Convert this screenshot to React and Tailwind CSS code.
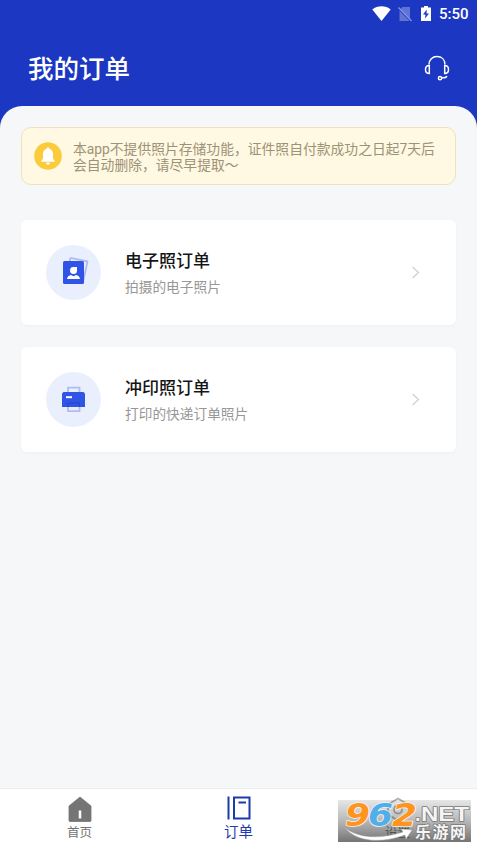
import React from 'react';
import clsx from 'clsx';

const StatusBar = () => (
  <div className="h-[27px] pr-[9px] flex items-center justify-end text-white">
    <svg className="w-[19px] h-[15px]" viewBox="0 0 19 15" fill="currentColor">
      <path d="M0.3 3.5C5.5-.9 13.5-.9 18.7 3.5L9.5 15Z" />
    </svg>
    <svg className="w-[14px] h-4 ml-[7px]" viewBox="0 0 14 16" fill="none">
      <path d="M4.5 1H12V15H1.500V4Z" fill="#fff" opacity="0.3" />
      <path d="M1 3L13.500 16" stroke="#1c38c3" strokeWidth="1.500" />
      <path d="M.5 1.500L13.500 15" stroke="#8494de" strokeWidth="1.300" />
    </svg>
    <svg className="w-[10px] h-[15px] ml-[9px]" viewBox="0 0 10 15">
      <path d="M3 0H7V1.500H10V15H0V1.500H3Z" fill="#fff" />
      <path d="M5.800 3.500L2 8.500H4.500L4 12.500L8 7.500H5.500Z" fill="#1c38c3" />
    </svg>
    <span className="ml-2 pt-0.5 w-[29px] text-[15px] leading-none font-medium whitespace-nowrap">5:50</span>
  </div>
);

const HeadsetIcon = () => (
  <svg className="w-[26px] h-[26px] mt-0.5" viewBox="0 0 26 26" fill="none" stroke="#fff" strokeWidth="1.5">
    <path d="M5 9.500C5 4.500 8.500 1.600 13 1.600S21 4.500 21 9.500" />
    <path d="M5.300 10.500V18.500C2.800 18.500 1.500 17 1.500 14.500S2.800 10.500 5.300 10.500Z" />
    <path d="M20.700 10.500V18.500C23.200 18.500 24.500 17 24.500 14.500S23.200 10.500 20.700 10.500Z" />
    <circle cx="16" cy="23.200" r="1.600" />
    <path d="M17.700 22.800C20 23 22.500 22.500 22.800 21" />
  </svg>
);

const BellIcon = () => (
  <svg className="w-7 h-7 shrink-0" viewBox="0 0 28 28">
    <circle cx="14" cy="14" r="13.800" fill="#fbcb3c" />
    <path d="M14 5.500C14.800 5.500 15.300 6 15.300 6.700C17.800 7.300 19 9.200 19 11.500V16.500L20.800 19V19.800H7.200V19L9 16.500V11.500C9 9.200 10.200 7.300 12.700 6.700C12.700 6 13.200 5.500 14 5.500Z" fill="#fff" />
    <path d="M12 20.500H16C15.700 22.200 15 22.700 14 22.700S12.300 22.200 12 20.500Z" fill="#fff" />
  </svg>
);

const PhotoIcon = () => (
  <svg className="w-[55px] h-[55px]" viewBox="0 0 55 55">
    <path d="M24.500 12.800L41.500 16.500L37.500 35" fill="none" stroke="#afbcf0" strokeWidth="1.800" strokeLinejoin="round" />
    <path d="M24.500 12.800L23.500 17" stroke="#afbcf0" strokeWidth="1.800" />
    <rect x="17" y="16" width="21" height="23" rx="1.500" fill="#2f54e6" />
    <path d="M27.800 22H31V25.400A3.500 3.500 0 1 1 27.800 22Z" fill="#fff" />
    <path d="M21 34C21.200 31.500 23 30.500 25 30L27.500 31.300L30 30C32.200 30.500 33.800 31.500 34 34Z" fill="#fff" />
  </svg>
);

const PrinterIcon = () => (
  <svg className="w-[55px] h-[55px]" viewBox="0 0 55 55">
    <path d="M22 21V15.700H33.500V21" fill="none" stroke="#afbcf0" strokeWidth="1.800" />
    <path d="M17.500 20H37.500L39 21.500V35H16V21.500Z" fill="#2f54e6" />
    <path d="M20 25.200H26" stroke="#fff" strokeWidth="2" />
    <path d="M22 35V31H33.500V35" fill="none" stroke="#2547c9" strokeWidth="1" />
    <path d="M22 35V39.200H33.500V35" fill="none" stroke="#afbcf0" strokeWidth="1.800" />
  </svg>
);

const HomeIcon = () => (
  <svg className="w-6 h-[26px]" viewBox="0 0 24 26">
    <path d="M12 1L23 10V24.500Q23 25.500 22 25.500H2Q1 25.500 1 24.500V10Z" fill="#757575" stroke="#757575" strokeWidth="0.800" strokeLinejoin="round" />
    <path d="M12 14.500V22.500" stroke="#fff" strokeWidth="2.500" />
  </svg>
);

const OrderIcon = () => (
  <svg className="w-6 h-6" viewBox="0 0 24 24" fill="none" stroke="#1f3bab" strokeWidth="2">
    <path d="M1.500 0.500V23.500M7 1.500H22.500V22.500H7ZM11.500 6.500H19" />
  </svg>
);

const SettingsIcon = () => (
  <svg className="w-6 h-[26px]" viewBox="0 0 24 26" fill="none" stroke="#b0b0b0" strokeWidth="1.800">
    <path d="M12 2.500L22 8.500V18.500L12 24.500L2 18.500V8.500Z" />
    <circle cx="12" cy="13.500" r="4" />
  </svg>
);

const orders = [
  { id: 'digital', title: '电子照订单', description: '拍摄的电子照片', icon: PhotoIcon },
  { id: 'print', title: '冲印照订单', description: '打印的快递订单照片', icon: PrinterIcon }
];

const tabs = [
  { id: 'home', label: '首页', icon: HomeIcon },
  { id: 'orders', label: '订单', icon: OrderIcon },
  { id: 'settings', label: '设置', icon: SettingsIcon }
];

const OrderCard = ({ title, description, icon: Icon }) => (
  <button className="w-full h-[105px] pl-[25px] pr-9 flex items-center text-left bg-white rounded-md shadow-[0_1px_3px_rgba(0,0,0,0.03)]">
    <div className="w-[55px] h-[55px] rounded-full bg-[#eaeffe]">
      <Icon />
    </div>
    <div className="ml-6 flex-1">
      <div className="pt-px text-[17px] leading-[25px] font-medium text-[#151515]">{title}</div>
      <div className="mt-0.5 text-[13.700px] leading-[22px] text-[#979797]">{description}</div>
    </div>
    <svg className="w-[9px] h-[13px]" viewBox="0 0 9 13" fill="none" stroke="#d0d0d0" strokeWidth="1.300">
      <path d="M1.500 1L7.500 6.500L1.500 12" />
    </svg>
  </button>
);

const Watermark = () => (
  <svg className="absolute left-[338px] top-[800px] w-[133px] h-[42px] overflow-visible" viewBox="0 0 133 42">
    <defs>
      <linearGradient id="plate" x1="0" y1="0" x2="0" y2="1">
        <stop offset="0" stopColor="#333" stopOpacity="0.120" />
        <stop offset="0.500" stopColor="#333" stopOpacity="0.350" />
        <stop offset="1" stopColor="#333" stopOpacity="0.680" />
      </linearGradient>
    </defs>
    <rect width="133" height="42" fill="url(#plate)" />
    <path d="M7 28C23 40 46 38 65 32L63 29L74 30L68 39L67 35C45 43 20 43 7 28Z" fill="#fff" stroke="#aaa" strokeWidth="0.500" />
    <g fontWeight="700" paintOrder="stroke" strokeLinejoin="round">
      <g fontFamily="DejaVu Sans, sans-serif" fontSize="32" fontStyle="italic" stroke="#f4f4f4" strokeWidth="1.500">
        <text x="7" y="25.500" textLength="25" lengthAdjust="spacingAndGlyphs" fill="#ff941f">9</text>
        <text x="30" y="25.500" textLength="25" lengthAdjust="spacingAndGlyphs" fill="#51aee8">6</text>
        <text x="54" y="25.500" textLength="25" lengthAdjust="spacingAndGlyphs" fill="#ff941f">2</text>
      </g>
      <g fontFamily="Liberation Sans, Noto Sans CJK SC, sans-serif" fill="#f5f5f5" stroke="#777" strokeWidth="1.500">
        <text x="77" y="20.500" fontSize="20" textLength="5">.</text>
        <text x="83" y="20.500" fontSize="20" textLength="48" lengthAdjust="spacingAndGlyphs">NET</text>
        <text x="77" y="38" fontSize="16" textLength="51">乐游网</text>
      </g>
    </g>
  </svg>
);

const App = () => {
  const activeTab = 'orders';

  return (
    <div className="relative h-[848px] flex flex-col overflow-hidden bg-[#1c38c3] font-[Roboto,'Noto_Sans_CJK_SC',sans-serif]">
      <StatusBar />

      <header className="h-[79px] pl-7 pr-[27px] flex items-center justify-between">
        <h1 className="pt-1 text-[25.500px] leading-9 font-medium text-white">我的订单</h1>
        <HeadsetIcon />
      </header>

      <main className="flex-1 px-[21px] pt-[21px] bg-[#f5f7f9] rounded-t-[22px]">
        {/* Notice */}
        <div className="h-[58px] pl-3 flex items-center rounded-[10px] border border-[#eee2bd] bg-[#fff8e2]">
          <BellIcon />
          <p className="pt-0.5 ml-[11px] text-[13.800px] leading-4 text-[#9d9276] whitespace-nowrap">
            本app不提供照片存储功能，证件照自付款成功之日起7天后
            <br />
            会自动删除，请尽早提取～
          </p>
        </div>

        {/* Orders */}
        <div className="mt-[35px] flex flex-col gap-[22px]">
          {orders.map((order) => (
            <OrderCard key={order.id} {...order} />
          ))}
        </div>
      </main>

      {/* Tabs */}
      <nav className="h-[60px] flex bg-white border-t border-[#ececee]">
        {tabs.map((tab) => {
          const Icon = tab.icon;
          const isActive = tab.id === activeTab;

          return (
            <button key={tab.id} className="flex-1 pt-[7px] flex flex-col items-center">
              <Icon />
              <span className={clsx(
                isActive
                  ? 'mt-0.5 text-[14.500px] leading-[22px] text-[#1f3bab]'
                  : 'mt-px text-[12.500px] leading-[20px] text-[#757575]'
              )}>
                {tab.label}
              </span>
            </button>
          );
        })}
      </nav>

      <Watermark />
    </div>
  );
};

export default App;
